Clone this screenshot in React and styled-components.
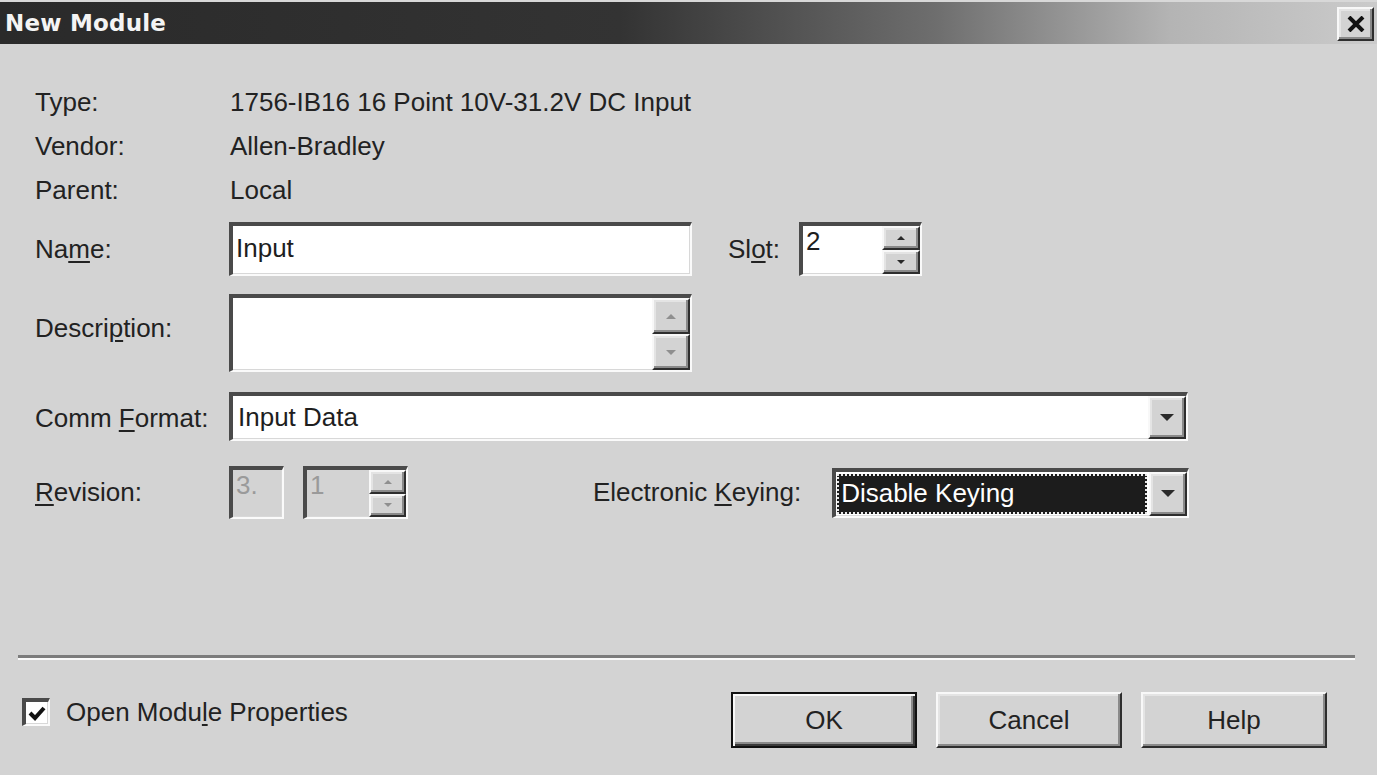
import React from "react";
import styled, { createGlobalStyle } from "styled-components";

const GlobalStyle = createGlobalStyle`
  html, body {
    margin: 0;
    padding: 0;
    background: #d3d3d3;
  }
  body {
    font-family: "Liberation Sans", Arial, sans-serif;
    color: #1e1e1e;
  }
`;

const Window = styled.div`
  width: 1377px;
  height: 775px;
  overflow: hidden;
  background: #d3d3d3;
  display: flex;
  flex-direction: column;
`;

const TitleBar = styled.div`
  height: 44px;
  flex-shrink: 0;
  display: flex;
  align-items: center;
  justify-content: space-between;
  padding: 0 3px 0 5px;
  box-sizing: border-box;
  background: linear-gradient(to right, #2a2a2a 0%, #333333 45%, #6e6e6e 68%, #b4b4b4 85%, #cbcbcb 100%);
  border-top: 2px solid #d8d8d8;
`;

const Title = styled.span`
  font-family: "DejaVu Sans", Verdana, sans-serif;
  font-weight: bold;
  font-size: 23px;
  color: #f4f4f4;
  letter-spacing: 0.2px;
`;

const raised = `
  border: 2px solid;
  border-color: #f8f8f8 #2e2e2e #2e2e2e #f8f8f8;
  box-shadow: inset -2px -2px 0 #8a8a8a, inset 2px 2px 0 #e4e4e4;
  background: #d3d3d3;
  box-sizing: border-box;
`;

const sunken = `
  border-style: solid;
  border-width: 4px 2px 2px 4px;
  border-color: #4a4a4a #fafafa #fafafa #4a4a4a;
  box-shadow: inset -1px -1px 0 #d8d8d8;
  box-sizing: border-box;
`;

const CloseButton = styled.div`
  ${raised}
  width: 37px;
  height: 34px;
  display: flex;
  align-items: center;
  justify-content: center;
  margin-top: 2px;
`;

const Body = styled.div`
  flex: 1;
  display: flex;
  flex-direction: column;
  padding: 36px 22px 0 18px;
`;

const Form = styled.div`
  display: flex;
  flex-direction: column;
  padding-left: 17px;
`;

const Row = styled.div`
  display: grid;
  grid-template-columns: 195px 1fr;
  align-items: center;
  height: ${(p) => p.$h}px;
  margin-top: ${(p) => p.$mt || 0}px;
`;

const Label = styled.span`
  font-size: 26px;
  white-space: nowrap;
  color: #222;
  margin-top: ${(p) => p.$shift || 0}px;
  u {
    text-decoration-thickness: 2px;
    text-underline-offset: 3px;
  }
`;

const Value = styled.span`
  font-size: 26px;
  white-space: nowrap;
  color: #222;
`;

const Line = styled.div`
  display: flex;
  align-items: center;
  margin-left: -1px;
`;

const TextBox = styled.div`
  ${sunken}
  width: ${(p) => p.$w}px;
  height: ${(p) => p.$h}px;
  background: ${(p) => (p.$disabled ? "#d3d3d3" : "#ffffff")};
  color: ${(p) => (p.$disabled ? "#9a9a9a" : "#1e1e1e")};
  font-size: 26px;
  display: flex;
  align-items: ${(p) => (p.$top ? "flex-start" : "center")};
  justify-content: space-between;
  padding-left: 3px;
`;

const BoxText = styled.span`
  flex: 1;
  white-space: nowrap;
  line-height: 1;
  margin-top: ${(p) => (p.$top ? 2 : -4)}px;
`;

const SpinCol = styled.div`
  display: flex;
  flex-direction: column;
  align-self: stretch;
  width: ${(p) => p.$w}px;
`;

const SpinButton = styled.div`
  ${raised}
  flex: 1;
  display: flex;
  align-items: center;
  justify-content: center;
`;

const Arrow = styled.span`
  width: 0;
  height: 0;
  border-left: ${(p) => p.$s}px solid transparent;
  border-right: ${(p) => p.$s}px solid transparent;
  ${(p) =>
    p.$up
      ? `border-bottom: ${p.$s}px solid ${p.$c || "#2a2a2a"};`
      : `border-top: ${p.$s}px solid ${p.$c || "#2a2a2a"};`}
`;

const SlotLabel = styled(Label)`
  margin-left: 36px;
  margin-right: 19px;
`;

const KeyLabel = styled(Label)`
  margin-left: 185px;
  margin-right: 31px;
`;

const Gap = styled.div`
  width: ${(p) => p.$w}px;
`;

const Select = styled.div`
  ${sunken}
  width: ${(p) => p.$w}px;
  height: ${(p) => p.$h}px;
  background: #ffffff;
  display: flex;
  align-items: stretch;
  font-size: 26px;
`;

const SelectText = styled.div`
  flex: 1;
  display: flex;
  align-items: center;
  padding-left: 4px;
  margin: 2px 2px 2px 1px;
  ${(p) =>
    p.$focus &&
    `
    background: #1c1c1c;
    color: #ffffff;
    outline: 2px dotted #e8e8e8;
    outline-offset: -2px;
  `}
`;

const DropButton = styled.div`
  ${raised}
  width: 38px;
  display: flex;
  align-items: center;
  justify-content: center;
`;

const Separator = styled.div`
  margin-top: 136px;
  height: 3px;
  background: #7c7c7c;
  border-bottom: 2px solid #fafafa;
`;

const Footer = styled.div`
  display: flex;
  align-items: center;
  justify-content: space-between;
  margin-top: 32px;
  padding: 0 28px 0 4px;
`;

const CheckRow = styled.label`
  display: flex;
  align-items: center;
  gap: 16px;
  font-size: 26px;
  margin-top: -16px;
  color: #222;
  u {
    text-decoration-thickness: 2px;
    text-underline-offset: 3px;
  }
`;

const CheckBox = styled.span`
  ${sunken}
  width: 28px;
  height: 28px;
  background: #ffffff;
  display: flex;
  align-items: center;
  justify-content: center;
`;

const Buttons = styled.div`
  display: flex;
  gap: 19px;
`;

const PushButton = styled.div`
  ${raised}
  width: 186px;
  height: 56px;
  display: flex;
  align-items: center;
  justify-content: center;
  font-size: 26px;
  color: #222;
  ${(p) =>
    p.$default &&
    `
    border-color: #111;
    box-shadow: inset 2px 2px 0 #f8f8f8, inset -2px -2px 0 #3a3a3a, inset -4px -4px 0 #8a8a8a;
  `}
`;

function Spinner({ w, h, value, disabled, btnW }) {
  const c = disabled ? "#8f8f8f" : "#2a2a2a";
  return (
    <TextBox $w={w} $h={h} $disabled={disabled} $top>
      <BoxText $top>{value}</BoxText>
      <SpinCol $w={btnW}>
        <SpinButton>
          <Arrow $up $s={4} $c={c} />
        </SpinButton>
        <SpinButton>
          <Arrow $s={4} $c={c} />
        </SpinButton>
      </SpinCol>
    </TextBox>
  );
}

export default function App() {
  return (
    <Window>
      <GlobalStyle />
      <TitleBar>
        <Title>New Module</Title>
        <CloseButton>
          <svg width="18" height="16" viewBox="0 0 18 16">
            <path d="M2 1 L16 15 M16 1 L2 15" stroke="#111" strokeWidth="4" />
          </svg>
        </CloseButton>
      </TitleBar>

      <Body>
        <Form>
          <Row $h={44}>
            <Label>Type:</Label>
            <Value>1756-IB16 16 Point 10V-31.2V DC Input</Value>
          </Row>
          <Row $h={45}>
            <Label>Vendor:</Label>
            <Value>Allen-Bradley</Value>
          </Row>
          <Row $h={43}>
            <Label>Parent:</Label>
            <Value>Local</Value>
          </Row>

          <Row $h={54} $mt={10}>
            <Label>
              Na<u>m</u>e:
            </Label>
            <Line>
              <TextBox $w={463} $h={54}>
                <BoxText>Input</BoxText>
              </TextBox>
              <SlotLabel>
                Sl<u>o</u>t:
              </SlotLabel>
              <Spinner w={123} h={54} value="2" btnW={38} />
            </Line>
          </Row>

          <Row $h={78} $mt={18}>
            <Label $shift={-10}>
              Descri<u>p</u>tion:
            </Label>
            <Line>
              <TextBox $w={463} $h={78} $top>
                <BoxText />
                <SpinCol $w={38}>
                  <SpinButton>
                    <Arrow $up $s={5} $c="#8f8f8f" />
                  </SpinButton>
                  <SpinButton>
                    <Arrow $s={5} $c="#8f8f8f" />
                  </SpinButton>
                </SpinCol>
              </TextBox>
            </Line>
          </Row>

          <Row $h={49} $mt={20}>
            <Label $shift={4}>
              Comm <u>F</u>ormat:
            </Label>
            <Line>
              <Select $w={959} $h={49}>
                <SelectText>Input Data</SelectText>
                <DropButton>
                  <Arrow $s={7} />
                </DropButton>
              </Select>
            </Line>
          </Row>

          <Row $h={53} $mt={25}>
            <Label>
              <u>R</u>evision:
            </Label>
            <Line>
              <TextBox $w={55} $h={53} $disabled $top>
                <BoxText $top>3.</BoxText>
              </TextBox>
              <Gap $w={19} />
              <Spinner w={105} h={53} value="1" disabled btnW={37} />
              <KeyLabel>
                Electronic <u>K</u>eying:
              </KeyLabel>
              <Select $w={357} $h={50}>
                <SelectText $focus>Disable Keying</SelectText>
                <DropButton>
                  <Arrow $s={7} />
                </DropButton>
              </Select>
            </Line>
          </Row>
        </Form>

        <Separator />

        <Footer>
          <CheckRow>
            <CheckBox>
              <svg width="18" height="16" viewBox="0 0 18 16">
                <path d="M2 8 L7 13 L16 3" fill="none" stroke="#111" strokeWidth="4" />
              </svg>
            </CheckBox>
            <span>
              Open Modu<u>l</u>e Properties
            </span>
          </CheckRow>
          <Buttons>
            <PushButton $default>OK</PushButton>
            <PushButton>Cancel</PushButton>
            <PushButton>Help</PushButton>
          </Buttons>
        </Footer>
      </Body>
    </Window>
  );
}
